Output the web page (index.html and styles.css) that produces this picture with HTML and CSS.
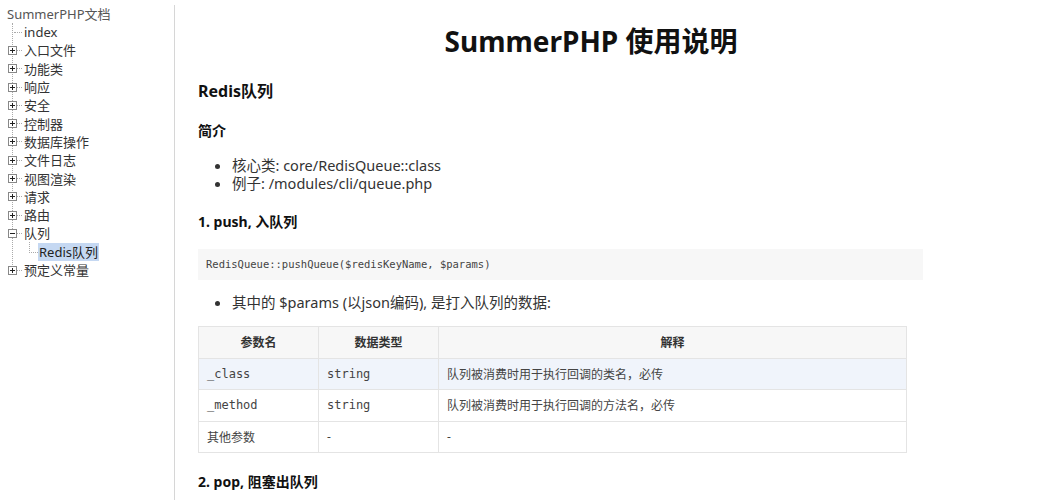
FILE: index.html
```html
<!DOCTYPE html>
<html lang="zh-CN">
<head>
    <meta charset="UTF-8">
    <title>SummerPHP 使用说明</title>
    <link rel="stylesheet" href="styles.css">
</head>
<body>

    <div class="layout">
        <!-- Left tree menu -->
        <div class="sidebar">
            <div class="tree-title">SummerPHP文档</div>
            <ul class="tree">
                <li class="leaf"><span class="dash"></span><span class="label">index</span></li>
                <li><span class="box plus"></span><span class="dash"></span><span class="label">入口文件</span></li>
                <li><span class="box plus"></span><span class="dash"></span><span class="label">功能类</span></li>
                <li><span class="box plus"></span><span class="dash"></span><span class="label">响应</span></li>
                <li><span class="box plus"></span><span class="dash"></span><span class="label">安全</span></li>
                <li><span class="box plus"></span><span class="dash"></span><span class="label">控制器</span></li>
                <li><span class="box plus"></span><span class="dash"></span><span class="label">数据库操作</span></li>
                <li><span class="box plus"></span><span class="dash"></span><span class="label">文件日志</span></li>
                <li><span class="box plus"></span><span class="dash"></span><span class="label">视图渲染</span></li>
                <li><span class="box plus"></span><span class="dash"></span><span class="label">请求</span></li>
                <li><span class="box plus"></span><span class="dash"></span><span class="label">路由</span></li>
                <li><span class="box"></span><span class="dash"></span><span class="label">队列</span></li>
                <li class="child"><span class="elbow"></span><span class="label current">Redis队列</span></li>
                <li><span class="box plus"></span><span class="dash"></span><span class="label">预定义常量</span></li>
            </ul>
        </div>

        <!-- Document -->
        <div class="content">
            <h1>SummerPHP 使用说明</h1>

            <h2>Redis队列</h2>

            <h3>简介</h3>
            <ul class="list">
                <li>核心类: core/RedisQueue::class</li>
                <li>例子: /modules/cli/queue.php</li>
            </ul>

            <h4>1. push, 入队列</h4>
            <pre class="code">RedisQueue::pushQueue($redisKeyName, $params)</pre>

            <ul class="list">
                <li>其中的 $params (以json编码), 是打入队列的数据:</li>
            </ul>

            <table class="params">
                <thead>
                    <tr>
                        <th class="col-name">参数名</th>
                        <th class="col-type">数据类型</th>
                        <th>解释</th>
                    </tr>
                </thead>
                <tbody>
                    <tr class="hl">
                        <td class="mono">_class</td>
                        <td class="mono">string</td>
                        <td>队列被消费时用于执行回调的类名，必传</td>
                    </tr>
                    <tr>
                        <td class="mono">_method</td>
                        <td class="mono">string</td>
                        <td>队列被消费时用于执行回调的方法名，必传</td>
                    </tr>
                    <tr>
                        <td>其他参数</td>
                        <td>-</td>
                        <td>-</td>
                    </tr>
                </tbody>
            </table>

            <h4 class="next">2. pop, 阻塞出队列</h4>
        </div>
    </div>

</body>
</html>
```

FILE: styles.css
```css
body {
    margin: 0;
    font-family: "Noto Sans", "Noto Sans CJK SC", sans-serif;
    color: #222;
    background: #fff;
    overflow: hidden;
}

.layout {
    display: flex;
    height: 500px;
}

/* Tree menu */
.sidebar {
    width: 174px;
    flex-shrink: 0;
    border-right: 1px solid #d6d6d6;
    margin-top: 5px;
    font-size: 13px;
    color: #333;
}

.tree-title {
    padding-left: 7px;
    height: 18px;
    line-height: 18px;
    color: #555;
}

.tree {
    list-style: none;
    margin: 0 0 0 12px;
    padding: 0;
    border-left: 1px dotted #aaa;
    height: 252px;
}

.tree li {
    display: flex;
    align-items: center;
    height: 18.3px;
    margin-left: -5px;
}

.box {
    position: relative;
    width: 7px;
    height: 7px;
    border: 1px solid #888;
    background: #fff;
    flex-shrink: 0;
}

.box::before {
    content: "";
    position: absolute;
    left: 1px;
    top: 3px;
    width: 5px;
    height: 1px;
    background: #222;
}

.box.plus::after {
    content: "";
    position: absolute;
    left: 3px;
    top: 1px;
    width: 1px;
    height: 5px;
    background: #222;
}

.dash {
    width: 5px;
    border-top: 1px dotted #aaa;
    margin-right: 1px;
}

.tree li.leaf .dash {
    width: 8px;
    margin-left: 6px;
}

.tree li.child {
    margin-left: 16px;
}

.elbow {
    width: 8px;
    height: 10px;
    margin-top: -9px;
    border-left: 1px dotted #aaa;
    border-bottom: 1px dotted #aaa;
}

.label {
    line-height: 18px;
    padding: 0 1px;
    white-space: nowrap;
}

.label.current {
    background: #c5d8f2;
    color: #222;
}

/* Document */
.content {
    padding: 20px 0 0 23px;
    width: 786px;
    color: #222;
}

h1 {
    margin: 0 0 18px;
    font-size: 28px;
    text-align: center;
    color: #111;
}

h2 {
    margin: 0 0 18px;
    font-size: 16px;
    color: #111;
}

h3 {
    margin: 0 0 16px;
    font-size: 14px;
    color: #111;
}

h4 {
    margin: 19px 0 18px;
    font-size: 14px;
    color: #111;
}

h4.next {
    margin-top: 18px;
}

.list {
    margin: 0;
    padding-left: 34px;
    font-size: 14.5px;
    line-height: 18px;
    color: #333;
}

.code {
    margin: 0 61px 13px 0;
    padding: 0 8px;
    height: 31px;
    line-height: 31px;
    background: #f7f7f7;
    font-family: "DejaVu Sans Mono", monospace;
    font-size: 10.5px;
    color: #444;
}

.params {
    margin-top: 15px;
    width: 709px;
    border-collapse: collapse;
    font-size: 12px;
    color: #444;
}

.params th,
.params td {
    border: 1px solid #e4e4e4;
    height: 30.5px;
    padding: 0 8px;
    text-align: left;
}

.params th {
    background: #f7f7f7;
    text-align: center;
    font-weight: bold;
    color: #333;
}

.params .col-name,
.params .col-type {
    width: 103px;
}

.params tr.hl td {
    background: #f0f4fb;
}

.mono {
    font-family: "DejaVu Sans Mono", monospace;
}
```
